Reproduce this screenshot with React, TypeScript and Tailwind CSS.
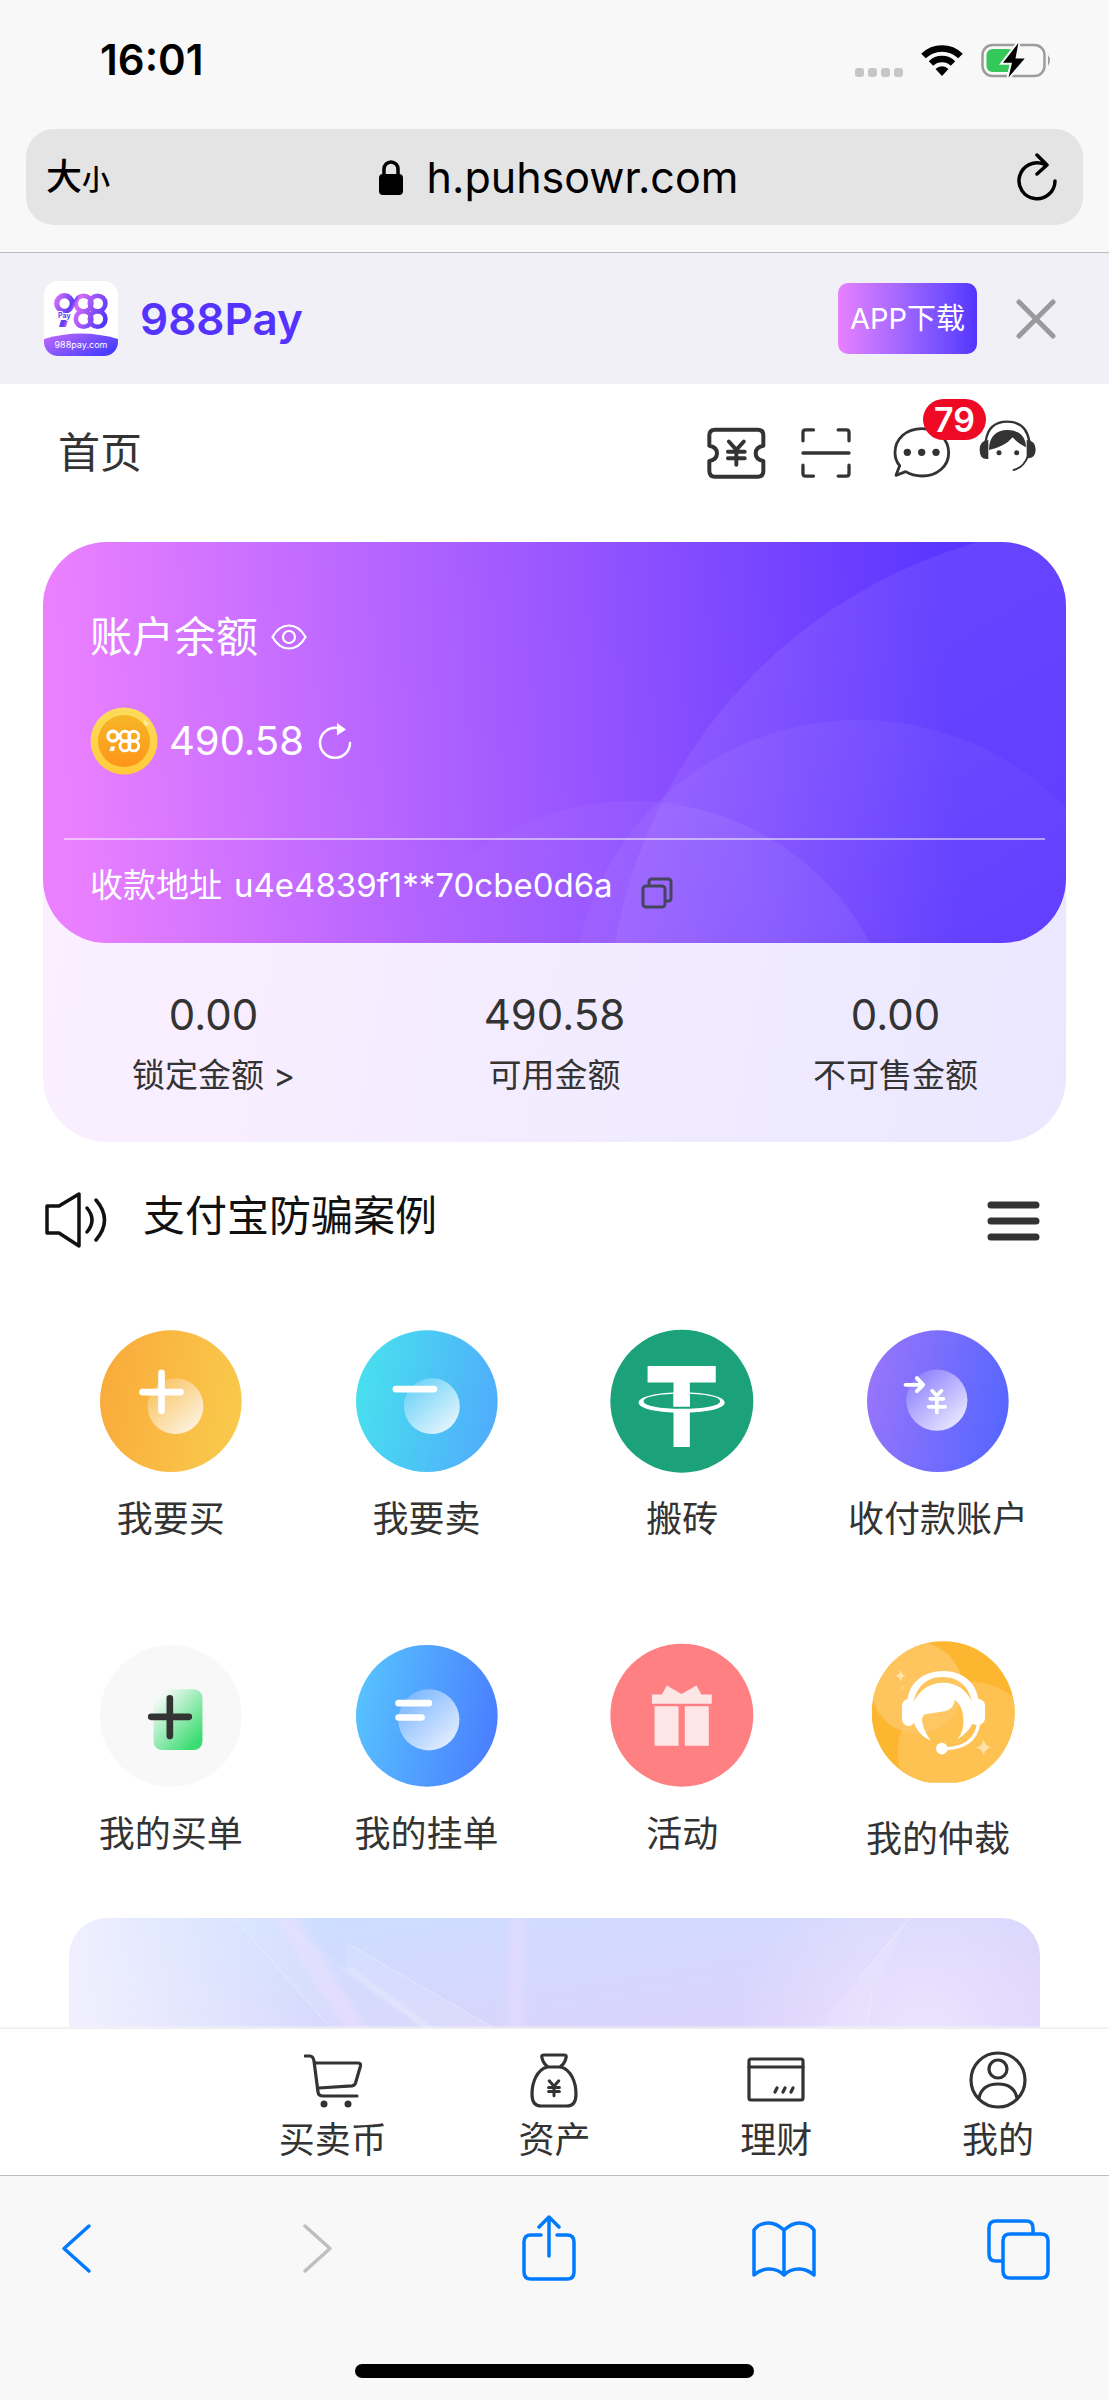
import React, { type ReactNode } from "react";

function Mark({ fill }: { fill: string }) {
  return (
    <g fill="none" stroke={fill} strokeWidth="4.6">
      <circle cx="20.5" cy="22.5" r="7.8" strokeWidth="5.2" />
      <circle cx="39.6" cy="22.5" r="7.8" />
      <circle cx="53.6" cy="22.5" r="7.8" />
      <circle cx="39.6" cy="38" r="7.8" />
      <circle cx="53.6" cy="38" r="7.8" />
      <path d="M17 39h7l-2 7h-7z" fill={fill} stroke="none" />
    </g>
  );
}

function Logo() {
  return (
    <svg className="h-[75px] w-[74px] shrink-0" viewBox="0 0 74 75" role="img" aria-label="988Pay">
      <defs>
        <linearGradient id="lg" gradientUnits="userSpaceOnUse" x1="8" y1="15" x2="64" y2="40">
          <stop offset="0" stopColor="#f07cf8" />
          <stop offset=".35" stopColor="#5f3df5" />
          <stop offset=".42" stopColor="#d46dfa" />
          <stop offset="1" stopColor="#4533f5" />
        </linearGradient>
        <linearGradient id="lb" x1="0" y1="0" x2="1" y2=".6">
          <stop offset="0" stopColor="#c26cfa" />
          <stop offset="1" stopColor="#4a3dff" />
        </linearGradient>
        <clipPath id="lc">
          <rect width="74" height="75" rx="14" />
        </clipPath>
      </defs>
      <g clipPath="url(#lc)">
        <rect width="74" height="75" fill="#fff" />
        <Mark fill="url(#lg)" />
        <path d="M0 58Q37 47 74 58V75H0Z" fill="url(#lb)" />
      </g>
      <text x="14" y="37" fontSize="7" fontWeight="700" fill="#5f3df5" stroke="#fff" strokeWidth="2" paintOrder="stroke">Pay</text>
      <text x="37" y="67" textAnchor="middle" fontSize="9" fill="#fff">988pay.com</text>
    </svg>
  );
}

function Coin() {
  return (
    <svg className="size-[68px] shrink-0" viewBox="0 0 68 68" aria-hidden="true">
      <defs>
        <linearGradient id="cn" x1="0" y1="0" x2="0" y2="1">
          <stop offset="0" stopColor="#f6b529" />
          <stop offset="1" stopColor="#ff9518" />
        </linearGradient>
        <linearGradient id="cr" x1="0" y1="0" x2="0" y2="1">
          <stop offset="0" stopColor="#fcdc5c" />
          <stop offset="1" stopColor="#ffca3a" />
        </linearGradient>
      </defs>
      <circle cx="34" cy="34" r="33.5" fill="url(#cr)" />
      <path d="M54 12l5 5-7 5z" fill="#ffe893" />
      <circle cx="34" cy="34" r="26" fill="url(#cn)" />
      <g transform="translate(10 15) scale(.63)">
        <Mark fill="#fff" />
      </g>
    </svg>
  );
}

function Yen({ x, y, s, w = 4 }: { x: number; y: number; s: number; w?: number }) {
  return (
    <path
      transform={`translate(${x} ${y}) scale(${s})`}
      strokeWidth={w}
      strokeLinecap="round"
      strokeLinejoin="round"
      fill="none"
      d="M-8-12L0-3 8-12M-9-1H9M-9 6H9M0-2V13"
    />
  );
}

const INK = "#333333";

function TicketIcon() {
  return (
    <svg className="h-[52px] w-[59px]" viewBox="202 532 177 156" fill="none" stroke={INK} strokeWidth="12" strokeLinejoin="round">
      <path d="M226 540H354Q371 540 371 557V588Q348 592 348 611T371 634V664Q371 681 354 681H226Q209 681 209 664V634Q232 630 232 611T209 588V557Q209 540 226 540Z" />
      <Yen x={290} y={609} s={2.8} w={4.2} />
    </svg>
  );
}

function ScanIcon() {
  return (
    <svg className="size-[50px]" viewBox="482 532 152 152" fill="none" stroke={INK} strokeWidth="10" strokeLinecap="round">
      <path d="M488 571V546Q488 538 496 538H520M595 538H620Q628 538 628 546V571M488 645V670Q488 678 496 678H520M595 678H620Q628 678 628 670V645M488 608H628" />
    </svg>
  );
}

function ChatIcon() {
  return (
    <svg className="h-[52px] w-[58px]" viewBox="761 529 174 156" fill="none" stroke={INK} strokeWidth="8.5" strokeLinejoin="round">
      <path d="M848 534C800 534 767 565 767 606Q767 628 781 645L770 674L799 663Q820 676 848 676C893 676 928 647 928 606S893 534 848 534Z" />
      <g fill={INK} stroke="none">
        <circle cx="804" cy="605" r="11" />
        <circle cx="847" cy="605" r="11" />
        <circle cx="890" cy="605" r="11" />
      </g>
    </svg>
  );
}

function SupportIcon() {
  return (
    <svg className="h-[66px] w-[57px]" viewBox="1016 510 171 198" fill="none" stroke={INK}>
      <path d="M1036 574C1042 532 1068 515 1101 515S1160 532 1167 574" strokeWidth="7" />
      <path d="M1046 600C1046 560 1068 540 1101 540S1157 558 1157 592Q1134 582 1117 562Q1094 590 1046 600Z" fill={INK} stroke="none" />
      <path d="M1044 570V627Q1018 630 1018 599Q1018 572 1044 570ZM1159 570V624Q1186 628 1186 598Q1186 572 1159 570Z" fill={INK} stroke="none" />
      <path d="M1163 618Q1150 653 1120 660" strokeWidth="6" strokeLinecap="round" />
      <circle cx="1076" cy="608" r="7.5" fill={INK} stroke="none" />
      <circle cx="1129" cy="608" r="7.5" fill={INK} stroke="none" />
    </svg>
  );
}

function Gradient({ id, from, to, diagonal = false }: { id: string; from: string; to: string; diagonal?: boolean }) {
  return (
    <linearGradient id={id} x1={diagonal ? ".15" : "0"} y1={diagonal ? ".1" : ".4"} x2={diagonal ? ".85" : "1"} y2={diagonal ? ".9" : ".6"}>
      <stop offset="0" stopColor={from} />
      <stop offset="1" stopColor={to} />
    </linearGradient>
  );
}

const round = "block size-[142px] shrink-0 overflow-visible";

function BuyIcon() {
  return (
    <svg className={round} viewBox="120 62 427 427">
      <defs>
        <Gradient id="b1" from="#f9ab3b" to="#f9ca4c" />
        <Gradient id="b2" from="#fac463" to="#fdf2dd" diagonal />
      </defs>
      <circle cx="333" cy="276" r="213" fill="url(#b1)" />
      <circle cx="347" cy="291" r="84" fill="url(#b2)" />
      <path d="M248 249H362M305 191V305" stroke="#fff" strokeWidth="20" strokeLinecap="round" />
    </svg>
  );
}

function SellIcon() {
  return (
    <svg className={round} viewBox="886 62 427 427">
      <defs>
        <Gradient id="s1" from="#48e0ee" to="#50acfc" />
        <Gradient id="s2" from="#6fd3f7" to="#e3f4fe" diagonal />
      </defs>
      <circle cx="1099" cy="276" r="213" fill="url(#s1)" />
      <circle cx="1114" cy="291" r="84" fill="url(#s2)" />
      <path d="M1006 240H1120" stroke="#fff" strokeWidth="20" strokeLinecap="round" />
    </svg>
  );
}

function TetherIcon() {
  return (
    <svg className={round} viewBox="96 62 427 427">
      <circle cx="309" cy="276" r="215" fill="#1ba27a" />
      <path d="M206 170H411V220H333V292H284V220H206Z" fill="#fff" />
      <path fillRule="evenodd" fill="#fff" d="M179 280C179 262 235 249 309 249S438 262 438 280 383 311 309 311 179 298 179 280ZM194 276C194 290 245 299 309 299S424 290 424 276 373 254 309 254 194 262 194 276Z" />
      <path d="M284 250H333V292H284ZM284 306H333V414H284Z" fill="#fff" />
    </svg>
  );
}

function AccountIcon() {
  return (
    <svg className={round} viewBox="861 62 427 427">
      <defs>
        <Gradient id="a1" from="#9775fb" to="#5666ff" />
        <Gradient id="a2" from="#8f82fe" to="#e8e6ff" diagonal />
      </defs>
      <circle cx="1074" cy="276" r="213" fill="url(#a1)" />
      <circle cx="1071" cy="273" r="92" fill="url(#a2)" />
      <path d="M977 227H1028M1011 207L1030 227L1011 246" fill="none" stroke="#fff" strokeWidth="12" strokeLinecap="round" strokeLinejoin="round" />
      <path d="M1057 245L1071 260L1085 245M1051 269H1091M1046 293H1096M1071 262V310" fill="none" stroke="#fff" strokeWidth="11" strokeLinecap="round" />
    </svg>
  );
}

function BuyOrdersIcon() {
  return (
    <svg className={round} viewBox="120 78 427 427">
      <defs>
        <Gradient id="o1" from="#f3f9f5" to="#3bdc72" diagonal />
      </defs>
      <circle cx="333" cy="291" r="213" fill="#f8f8f8" />
      <rect x="281" y="211" width="147" height="183" rx="26" fill="url(#o1)" />
      <path d="M274 294H387M330 238V352" stroke={INK} strokeWidth="20" strokeLinecap="round" />
    </svg>
  );
}

function ListingsIcon() {
  return (
    <svg className={round} viewBox="886 78 427 427">
      <defs>
        <Gradient id="l1" from="#57c2ff" to="#4a7eff" />
        <Gradient id="l2" from="#7db8ff" to="#e2ecff" diagonal />
      </defs>
      <circle cx="1099" cy="291" r="213" fill="url(#l1)" />
      <circle cx="1105" cy="303" r="92" fill="url(#l2)" />
      <path d="M1014 253H1105M1014 296H1083" stroke="#fff" strokeWidth="20" strokeLinecap="round" />
    </svg>
  );
}

function GiftIcon() {
  return (
    <svg className={round} viewBox="96 78 427 427">
      <circle cx="309" cy="289" r="215" fill="#ff8083" />
      <path d="M219 227H249L264 200L308 225L353 200L368 227H399V255H219ZM227 262H299V381H227ZM318 262H390V381H318Z" fill="#ffe6e6" />
    </svg>
  );
}

function ArbitrationIcon() {
  return (
    <svg className="block h-[147px] w-[142px] shrink-0 overflow-visible" viewBox="861 78 427 441">
      <defs>
        <clipPath id="ac">
          <path d="M875 65H1306V491H875Z" />
        </clipPath>
        <clipPath id="ad">
          <circle cx="1090" cy="281" r="215" />
        </clipPath>
      </defs>
      <g clipPath="url(#ac)">
        <g clipPath="url(#ad)">
          <rect x="870" y="60" width="440" height="440" fill="#fdb62f" />
          <circle cx="1166" cy="399" r="212" fill="#fdc252" />
          <circle cx="1011" cy="206" r="137" fill="#fec867" fillOpacity=".85" />
        </g>
      </g>
      <g fill="#fff">
        <path d="M962 152Q965 168 978 170 965 172 962 188 959 172 946 170 959 168 962 152ZM1212 361Q1216 383 1236 386 1216 389 1212 410 1208 389 1188 386 1208 383 1212 361Z" fillOpacity=".5" />
        <circle cx="968" cy="206" r="4" fillOpacity=".3" />
        <path d="M1000 250C1020 212 1050 191 1090 191S1160 212 1178 250L1188 290Q1176 335 1132 362Q1156 335 1150 290Q1148 262 1125 241Q1124 267 1098 276L1040 285Q1024 288 1027 308Q1032 338 1053 365Q1020 352 1005 318L990 290Z" />
        <path d="M983 240C990 190 1032 156 1090 156S1188 190 1196 240L1203 241Q1216 246 1216 262V298Q1214 316 1194 320L1172 312 1177 250C1168 207 1140 174 1088 174S1010 207 1001 250L1003 310Q998 322 983 321 966 316 966 298V264Q966 244 983 240Z" />
        <circle cx="1086" cy="389" r="17.5" />
      </g>
      <path d="M1197 312C1190 365 1150 388 1100 389" fill="none" stroke="#fff" strokeWidth="10" />
    </svg>
  );
}

type Tile = { label: string; icon: ReactNode };

const tiles: Tile[] = [
  { label: "我要买", icon: <BuyIcon /> },
  { label: "我要卖", icon: <SellIcon /> },
  { label: "搬砖", icon: <TetherIcon /> },
  { label: "收付款账户", icon: <AccountIcon /> },
  { label: "我的买单", icon: <BuyOrdersIcon /> },
  { label: "我的挂单", icon: <ListingsIcon /> },
  { label: "活动", icon: <GiftIcon /> },
  { label: "我的仲裁", icon: <ArbitrationIcon /> },
];

const tabs: Tile[] = [
  {
    label: "买卖币",
    icon: (
      <>
        <path d="M1 5h5q3 0 4 5l4 31q.5 4 5 4h34" />
        <path d="M11 12h43q3 0 2.5 3l-5 17q-.8 2.5-3.5 2.8L15 37" />
        <circle cx="20" cy="53" r="3.5" fill={INK} stroke="none" />
        <circle cx="44" cy="53" r="3.5" fill={INK} stroke="none" />
      </>
    ),
  },
  {
    label: "资产",
    icon: (
      <>
        <path d="M19 4h20q3 0 2 3l-1 3q-1 3-5 6H23q-4-3-5-6l-1-3q-1-3 2-3z" />
        <path d="M22 16C12 19 7 31 7 43q0 12 9 12h26q9 0 9-12C51 31 46 19 36 16" />
        <Yen x={29} y={37} s={0.6} w={5} />
      </>
    ),
  },
  {
    label: "理财",
    icon: (
      <>
        <rect x="2" y="8" width="54" height="41" rx="2" />
        <path d="M2 16H56M28 41l2-4M36 41l2-4M44 41l2-4" />
      </>
    ),
  },
  {
    label: "我的",
    icon: (
      <>
        <circle cx="29" cy="29" r="27" />
        <circle cx="29" cy="18" r="9" />
        <path d="M10 47Q13 33 29 33T48 47" />
      </>
    ),
  },
];

const stats = [
  { value: "0.00", label: "锁定金额 >" },
  { value: "490.58", label: "可用金额" },
  { value: "0.00", label: "不可售金额" },
];

const toolbar = [
  { name: "后退", color: "#007aff", d: "M46 11L21 33.5L46 56" },
  { name: "前进", color: "#bfbfc1", d: "M26 11L51 33.5L26 56" },
  { name: "分享", color: "#007aff", d: "M26 20H16Q9 20 9 27V57Q9 64 16 64H52Q59 64 59 57V27Q59 20 52 20H42M34 41V2M24 12L34 2L44 12" },
  { name: "书签", color: "#007aff", d: "M34 15Q26 8 19 8Q9 8 4 15V60Q11 54 19 54Q28 54 34 60Q40 54 49 54Q57 54 64 60V15Q59 8 49 8Q42 8 34 15ZM34 15V60" },
  { name: "标签页", color: "#007aff", d: "M16 46H10Q3 46 3 39V13Q3 6 10 6H40Q47 6 47 13V19M24 19H55Q62 19 62 26V56Q62 63 55 63H24Q17 63 17 56V26Q17 19 24 19Z" },
];

export default function App() {
  return (
    <div className="flex min-h-screen flex-col bg-white font-['Inter','Noto_Sans_CJK_SC',sans-serif] text-[#333333]">
      <header className="border-b border-[#bcbcbe] bg-[#f8f8f8] text-black">
        <div className="flex items-center justify-between pt-9 pr-[57px] pb-[45px] pl-[100px]">
          <time className="text-[42px] leading-[48px] font-semibold">16:01</time>
          <div className="flex items-center gap-[18px]">
            <div className="flex gap-1 pt-6">
              <i className="h-[9px] w-[9px] rounded-[3px] bg-[#c6c6c6]" />
              <i className="h-[9px] w-[9px] rounded-[3px] bg-[#c6c6c6]" />
              <i className="h-[9px] w-[9px] rounded-[3px] bg-[#c6c6c6]" />
              <i className="h-[9px] w-[9px] rounded-[3px] bg-[#c6c6c6]" />
            </div>
            <svg className="h-8 w-[42px]" viewBox="0 0 42 32" fill="none" stroke="#000" strokeWidth="6.5">
              <path d="M2.5 12a26.5 26.5 0 0 1 37 0M10 19.5a16 16 0 0 1 22 0" />
              <path d="M21 32l-6.5-7a9 9 0 0 1 13 0z" fill="#000" stroke="none" />
            </svg>
            <svg className="h-[35px] w-[71px]" viewBox="0 0 71 35">
              <rect x="1.5" y="2" width="62" height="31" rx="10" fill="none" stroke="#9c9c9c" strokeWidth="2.5" />
              <path d="M67 12q4 5 0 11z" fill="#9c9c9c" />
              <rect x="5.5" y="6" width="28" height="23" rx="6" fill="#34c759" />
              <path d="M37.4 0L22 19.7h9L27.5 34.6L43.7 15.4h-9.2z" fill="#000" stroke="#f8f8f8" strokeWidth="4" paintOrder="stroke" />
            </svg>
          </div>
        </div>
        <div className="mx-[26px] mb-[27px] flex items-center justify-between rounded-[28px] bg-[#e4e4e5] py-6 pr-[26px] pl-5">
          <button type="button" className="flex w-20 items-baseline leading-[48px] font-medium">
            <span className="text-[36px]">大</span>
            <span className="text-[28px] leading-[36px]">小</span>
          </button>
          <button type="button" className="flex items-center gap-6 text-[43px] leading-[48px]">
            <svg className="h-9 w-6" viewBox="0 0 24 36">
              <path d="M5 18V10a7 7 0 0 1 14 0v8" fill="none" stroke="#000" strokeWidth="3.5" />
              <rect y="15" width="24" height="21" rx="4" />
            </svg>
            h.puhsowr.com
          </button>
          <div className="flex w-[66px] justify-end">
            <button type="button" aria-label="重新加载">
              <svg className="block h-12 w-10" viewBox="0 0 40 48" fill="none" stroke="#000" strokeWidth="3.5" strokeLinecap="round" strokeLinejoin="round">
                <path d="M27 11.2A18 18 0 1 0 38 28M20 2l10 10-10 9" />
              </svg>
            </button>
          </div>
        </div>
      </header>

      <aside className="flex items-center bg-[#f1f0f6] py-7 pr-[52px] pl-11">
        <Logo />
        <strong className="ml-[22px] text-[44px] leading-[48px] font-semibold text-[#5433ff]">988Pay</strong>
        <button type="button" className="ml-auto rounded-[10px] bg-linear-to-r from-[#e980ff] to-[#5433ff] px-3 py-3 text-[29px] leading-[47px] text-white">
          APP下载
        </button>
        <button type="button" aria-label="关闭" className="ml-[38px]">
          <svg className="block size-[42px]" viewBox="0 0 42 42" stroke="#9a9a9e" strokeWidth="5" strokeLinecap="round">
            <path d="M4 4L38 38M38 4L4 38" />
          </svg>
        </button>
      </aside>

      <main className="flex flex-col">
        <div className="flex items-center justify-between pt-9 pr-[73px] pb-14 pl-[58px]">
          <h1 className="text-[42px] leading-[48px]">首页</h1>
          <div className="flex items-center">
            <button type="button" aria-label="优惠券" className="mr-[35px]"><TicketIcon /></button>
            <button type="button" aria-label="扫一扫" className="mr-[42px]"><ScanIcon /></button>
            <button type="button" aria-label="消息" className="relative mr-7">
              <ChatIcon />
              <span className="absolute -top-7 left-[30px] rounded-full bg-[#ee0a24] px-[11px] text-[34px] leading-[41px] font-semibold text-white">79</span>
            </button>
            <button type="button" aria-label="客服"><SupportIcon /></button>
          </div>
        </div>

        <section className="mx-[43px] rounded-[64px] bg-linear-[100deg] from-[#fcf0ff] to-[#eae8ff]">
          <div className="relative overflow-hidden rounded-[64px] bg-[linear-gradient(87deg,#ea80ff_3%,#5b36ff_88%)] pt-[71px] pb-[34px] text-white">
            <svg className="absolute inset-0 size-full" viewBox="0 0 1023 401" preserveAspectRatio="xMaxYMax slice" aria-hidden="true">
              <defs>
                <linearGradient id="arc" x1="0" y1="0" x2="0.6" y2="1">
                  <stop offset="0" stopColor="#fff" stopOpacity=".09" />
                  <stop offset=".8" stopColor="#fff" stopOpacity="0" />
                </linearGradient>
                <linearGradient id="dome" x1="0" y1=".4" x2="1" y2="0">
                  <stop offset=".1" stopColor="#fff" stopOpacity="0" />
                  <stop offset=".7" stopColor="#fff" stopOpacity=".06" />
                </linearGradient>
              </defs>
              <circle cx="1073" cy="490" r="509" fill="url(#arc)" />
              <circle cx="816" cy="465" r="287" fill="url(#arc)" fillOpacity=".7" />
              <circle cx="590" cy="528" r="269" fill="url(#dome)" />
            </svg>
            <div className="relative">
              <div className="flex items-center gap-[13px] px-[47px]">
                <h2 className="text-[42px] leading-[48px]">账户余额</h2>
                <button type="button" aria-label="显示余额">
                  <svg className="block h-[26px] w-9" viewBox="0 0 36 26" fill="none" stroke="#fff" strokeWidth="2.2">
                    <path d="M1.5 13C6 5 11 1.5 18 1.5S30 5 34.5 13C30 21 25 24.5 18 24.5S6 21 1.5 13Z" />
                    <circle cx="18" cy="13" r="6" />
                  </svg>
                </button>
              </div>
              <div className="mt-[46px] flex items-center px-[47px]">
                <Coin />
                <span className="ml-[11px] text-[40px] leading-[48px]">490.58</span>
                <button type="button" aria-label="刷新余额" className="ml-[14px]">
                  <svg className="block h-9 w-[34px]" viewBox="0 0 34 36" fill="none" stroke="#fff" strokeWidth="2.5" strokeLinecap="round">
                    <path d="M19 5A15 15 0 1 0 32 20" />
                    <path d="M19 0l9 6.5-9 6z" fill="#fff" stroke="none" />
                  </svg>
                </button>
              </div>
              <hr className="mx-[21px] mt-[63px] border-0 border-t-2 border-white/50" />
              <div className="mt-[21px] flex items-end px-[47px] text-[33px] leading-[48px]">
                <span className="mr-3">收款地址</span>
                <span>u4e4839f1**70cbe0d6a</span>
                <button type="button" aria-label="复制地址" className="ml-7">
                  <svg className="block size-8" viewBox="0 0 32 32" fill="none" stroke="#46455f" strokeWidth="3">
                    <path d="M8 8V5q0-3 3-3h16q3 0 3 3v16q0 3-3 3h-2" />
                    <rect x="2" y="9" width="22" height="21" rx="3" />
                  </svg>
                </button>
              </div>
            </div>
          </div>
          <dl className="grid grid-cols-3 pt-12 pb-[43px] text-center">
            {stats.map((s) => (
              <div key={s.label} className="flex flex-col-reverse gap-3">
                <dt className="text-[33px] leading-[48px]">{s.label}</dt>
                <dd className="text-[42px] leading-[48px]">{s.value}</dd>
              </div>
            ))}
          </dl>
        </section>

        <div className="mt-[50px] flex items-center pr-[69px] pl-[45px]">
          <svg className="h-14 w-[62px]" viewBox="0 0 62 56" fill="none" stroke="#111" strokeWidth="3.5" strokeLinejoin="round" strokeLinecap="round" aria-hidden="true">
            <path d="M2 14H14L34 2V54L14 41H2ZM42 16Q52 28 42 40M51 8Q68 28 51 48" />
          </svg>
          <a href="#notice" className="ml-9 self-start text-[42px] leading-[48px] text-[#111]">支付宝防骗案例</a>
          <button type="button" aria-label="菜单" className="ml-auto">
            <svg className="block h-[42px] w-[53px]" viewBox="0 0 53 42" stroke={INK} strokeWidth="7" strokeLinecap="round">
              <path d="M4 6H49M4 22H49M4 38H49" />
            </svg>
          </button>
        </div>

        <nav className="mx-[43px] mt-[82px] grid grid-cols-4 items-start gap-y-[102px]">
          {tiles.map((t) => (
            <a key={t.label} href="#tile" className="flex flex-col items-center gap-[23px] text-[36px] leading-[48px] whitespace-nowrap">
              {t.icon}
              {t.label}
            </a>
          ))}
        </nav>

        <div className="mx-[69px] mt-[55px] h-[110px] overflow-hidden rounded-t-[38px] bg-[radial-gradient(circle_at_88%_110%,#ece4fe_0%,transparent_22%),linear-gradient(80deg,#f2f0ff_0%,transparent_28%),linear-gradient(170deg,#cddeff_15%,#dcd2fc_85%)]">
          <svg className="size-full" viewBox="0 0 972 110" preserveAspectRatio="none" aria-hidden="true">
            <defs>
              <filter id="soft" x="-50%" y="-10%" width="200%" height="120%">
                <feGaussianBlur stdDeviation="4 1" />
              </filter>
            </defs>
            <g fill="#fff">
              <path d="M165 0L262 110H360L210 0Z" fillOpacity=".06" />
              <path d="M205 0L275 110H298L228 0Z" fill="#f0e0ff" fillOpacity=".5" filter="url(#soft)" />
              <path d="M278 25L425 110H355L278 50Z" fillOpacity=".1" />
              <path d="M441 0H457L455 110H439Z" fill="#eadcff" fillOpacity=".55" filter="url(#soft)" />
              <path d="M840 0L750 110H799L804 75Z" fillOpacity=".1" />
            </g>
            <path d="M278 50L360 110" stroke="#fff" strokeOpacity=".5" strokeWidth="3" filter="url(#soft)" />
            <path d="M165 0L262 110M841 0L790 62M804 75L799 110M278 25L425 110" stroke="#fff" strokeOpacity=".35" fill="none" />
          </svg>
        </div>
      </main>

      <nav className="grid grid-cols-5 border-t border-[#eeeef0] pt-[22px] pb-[11px] shadow-[0_-1px_2px_#f4f4f6]">
        {tabs.map((t, i) => (
          <a key={t.label} href="#tab" className={`flex flex-col items-center gap-[7px] text-[36px] leading-[48px] ${i === 0 ? "col-start-2" : ""}`}>
            <svg className="block size-[58px]" viewBox="0 0 58 58" fill="none" stroke={INK} strokeWidth="3.2" strokeLinecap="round" strokeLinejoin="round">
              {t.icon}
            </svg>
            {t.label}
          </a>
        ))}
      </nav>

      <footer className="flex grow flex-col border-t border-[#bfbfc1] bg-[#f8f8f8] pt-[39px]">
        <div className="flex justify-between pr-[55px] pl-[43px]">
          {toolbar.map((t) => (
            <button key={t.name} type="button" aria-label={t.name}>
              <svg className="block h-[66px] w-[68px]" viewBox="0 0 68 66" fill="none" stroke={t.color} strokeWidth="3.5" strokeLinecap="round" strokeLinejoin="round">
                <path d={t.d} />
              </svg>
            </button>
          ))}
        </div>
        <div className="mx-auto mt-[83px] h-[14px] w-[36%] rounded-full bg-black" />
      </footer>
    </div>
  );
}
